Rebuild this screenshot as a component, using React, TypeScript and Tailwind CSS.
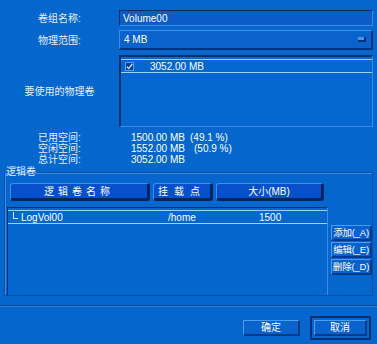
import React from 'react';

const font = { fontFamily: '"Liberation Sans", "Noto Sans CJK SC", sans-serif' };

const Label: React.FC<{ children: React.ReactNode }> = ({ children }) => (
  <div className="w-[119px] shrink-0 text-center text-[#e6eefc]">{children}</div>
);

const SideButton: React.FC<{ children: React.ReactNode }> = ({ children }) => (
  <div className="h-[16px] w-[41px] flex items-center justify-center bg-[#0a60cc] border-t border-l border-t-[#4d9cf0] border-l-[#4d9cf0] border-b-2 border-r-2 border-b-[#003a88] border-r-[#003a88] text-[9.5px] tracking-[-0.2px] leading-none">
    {children}
  </div>
);

const HeaderButton: React.FC<{ className: string; children: React.ReactNode }> = ({ className, children }) => (
  <div
    className={
      'h-[18px] flex items-center justify-center rounded-[3px] bg-[#0650cc] border-t border-l border-t-[#3f8cf0] border-l-[#3f8cf0] border-b-[3px] border-r-[3px] border-b-[#00245e] border-r-[#00245e] ' +
      className
    }
  >
    {children}
  </div>
);

export default function App() {
  return (
    <div className="w-[377px] h-[344px] bg-[#0567cd] text-white text-[10px] leading-[11px] whitespace-nowrap flex flex-col overflow-hidden" style={font}>
      <div className="pt-[10px] pr-[4px] flex flex-col">
        {/* volume group name */}
        <div className="flex items-center h-[16px]">
          <Label>卷组名称:</Label>
          <div className="flex-1 h-[16px] flex items-center pl-[3px] bg-[#0a5cc6] border-t border-l border-t-[#002a66] border-l-[#002a66] border-b border-r border-b-[#3d8ae0] border-r-[#3d8ae0]">
            Volume00
          </div>
        </div>
        {/* physical extent */}
        <div className="flex items-center h-[20px] mt-[4px]">
          <Label>物理范围:</Label>
          <div className="flex-1 h-[20px] flex items-center justify-between pl-[4px] pr-[5px] bg-[#0a62cc] border-t border-l border-t-[#3f8ce8] border-l-[#3f8ce8] border-b-2 border-r-2 border-b-[#00347e] border-r-[#00347e]">
            <span>4 MB</span>
            <span className="w-[8px] h-[5px] bg-[#4a94ec] border-b-2 border-r-2 border-b-[#002f72] border-r-[#002f72]" />
          </div>
        </div>
        {/* physical volumes to use */}
        <div className="flex items-center h-[72px] mt-[5px]">
          <Label>要使用的物理卷</Label>
          <div className="flex-1 h-[72px] bg-[#0568d0] border-t-2 border-l-2 border-t-[#00306e] border-l-[#00306e] border-b border-r border-b-[#3d8ae0] border-r-[#3d8ae0] flex flex-col">
            <div className="h-[3px] border-b border-b-[#9fd0ff]" />
            <div className="h-[13px] flex items-center border-b border-b-[#9fd0ff]">
              <span className="ml-[4px] w-[9px] h-[9px] bg-[#083f96] border border-[#5aa0ee] flex items-center justify-center">
                <svg width="7" height="7" viewBox="0 0 7 7">
                  <path d="M0.8 3.6 L2.7 5.6 L6.3 1" stroke="#d8e8ff" strokeWidth="1.3" fill="none" />
                </svg>
              </span>
              <span className="ml-[16px]">3052.00 MB</span>
            </div>
          </div>
        </div>
        {/* space */}
        <div className="mt-[5px] flex flex-col">
          <div className="flex h-[11px] items-center">
            <Label>已用空间:</Label>
            <span className="ml-[12px] w-[59px]">1500.00 MB</span>
            <span>(49.1 %)</span>
          </div>
          <div className="flex h-[11px] items-center">
            <Label>空闲空间:</Label>
            <span className="ml-[12px] w-[63px]">1552.00 MB</span>
            <span>(50.9 %)</span>
          </div>
          <div className="flex h-[11px] items-center">
            <Label>总计空间:</Label>
            <span className="ml-[12px]">3052.00 MB</span>
          </div>
        </div>
        {/* logical volumes group */}
        <fieldset className="ml-[4px] mt-[1px] h-[130px] border border-[#0a4ea8] shadow-[inset_1px_1px_0_#3d8ae0] pl-[2px] pr-0 pb-0 min-w-0">
          <legend className="px-[1px] -ml-[2px] leading-[12px] text-[#e6eefc]">逻辑卷</legend>
          <div className="flex h-[117px]">
            <div className="flex flex-col w-[321px]">
              <div className="flex gap-[3px] ml-[3px] mt-[5px]">
                <HeaderButton className="w-[140px] tracking-[4px]">逻辑卷名称</HeaderButton>
                <HeaderButton className="w-[60px] tracking-[6px]">挂载点</HeaderButton>
                <HeaderButton className="w-[108px]">大小(MB)</HeaderButton>
              </div>
              <div className="mt-[6px] flex-1 border-t border-l border-t-[#00306e] border-l-[#00306e] border-r border-r-[#3d8ae0] flex flex-col">
                <div className="h-[3px] border-b border-b-[#9fd0ff]" />
                <div className="h-[13px] flex items-center border-b border-b-[#9fd0ff]">
                  <span className="ml-[5px] w-[5px] h-[7px] border-l border-b border-[#e6eefc] -mt-[3px]" />
                  <span className="ml-[3px] w-[147px]">LogVol00</span>
                  <span className="w-[91px]">/home</span>
                  <span>1500</span>
                </div>
              </div>
            </div>
            <div className="flex-1 flex flex-col items-end gap-[1px] pt-[47px]">
              <SideButton>添加(_A)</SideButton>
              <SideButton>编辑(_E)</SideButton>
              <SideButton>删除(_D)</SideButton>
            </div>
          </div>
        </fieldset>
      </div>
      {/* separator */}
      <div className="mt-[9px] h-[2px] border-t border-t-[#00418f] border-b border-b-[#2a80de]" />
      {/* dialog buttons */}
      <div className="flex justify-end items-center pr-[6px] mt-[9px] gap-[10px]">
        <div className="w-[57px] h-[16px] flex items-center justify-center bg-[#0a62cc] border-t border-l border-t-[#4d9cf0] border-l-[#4d9cf0] border-b-2 border-r-2 border-b-[#003a88] border-r-[#003a88]">
          确定
        </div>
        <div className="w-[61px] h-[24px] p-[2px] border-2 border-[#003070]">
          <div className="w-full h-full flex items-center justify-center bg-[#0a62cc] border-t border-l border-t-[#4d9cf0] border-l-[#4d9cf0] border-b-2 border-r-2 border-b-[#003a88] border-r-[#003a88]">
            取消
          </div>
        </div>
      </div>
    </div>
  );
}
